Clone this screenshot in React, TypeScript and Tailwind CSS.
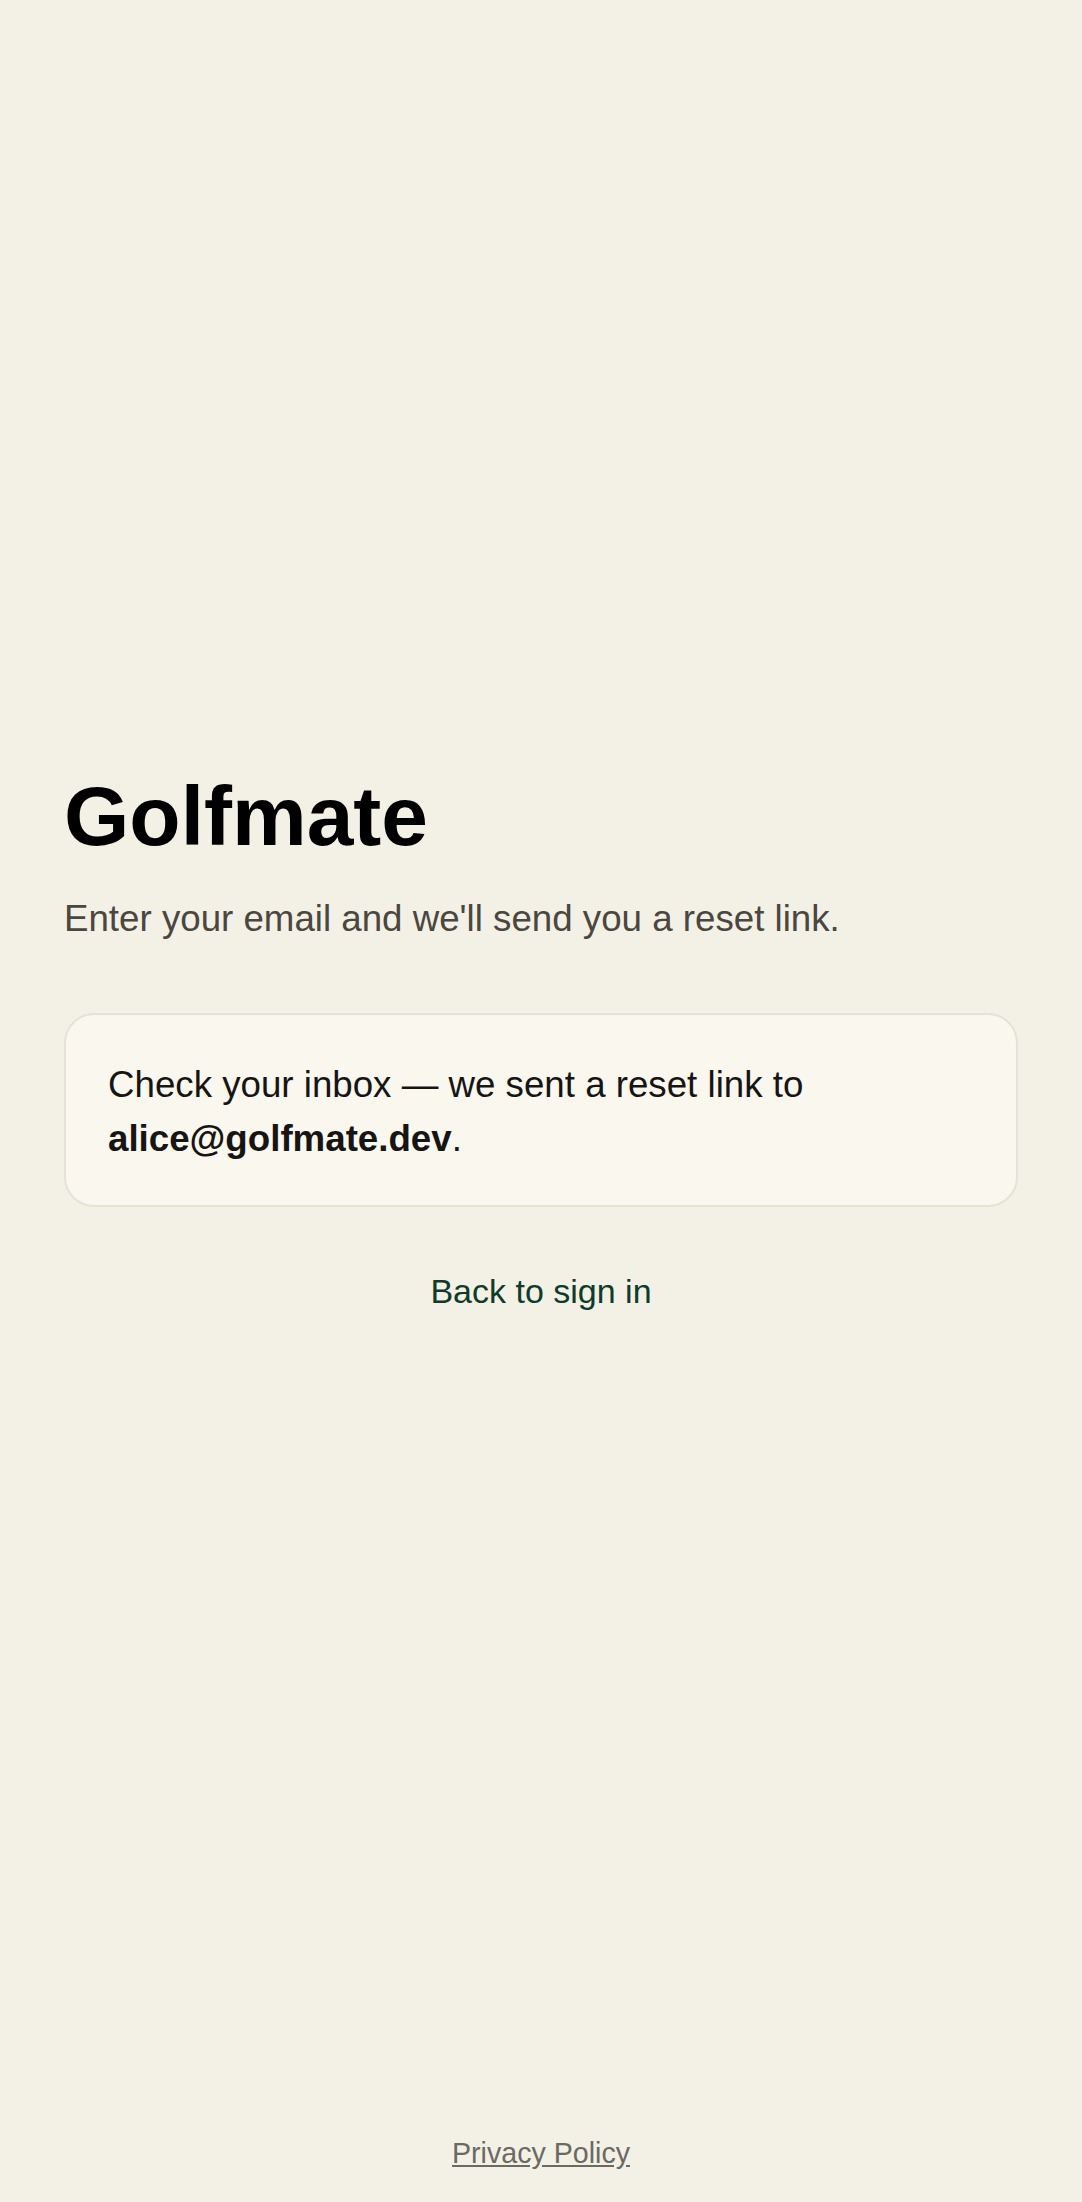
export default function App() {
  return (
    <div className="min-h-screen flex flex-col bg-[#f3f0e5] font-['Liberation_Sans',Arial,sans-serif]">
      <main className="flex-1 flex flex-col justify-center px-16">
        <h1 className="text-[84px] leading-[84px] font-bold text-black">Golfmate</h1>
        <p className="mt-[37px] text-[36.7px] leading-[48px] text-[#4a4640]">
          Enter your email and we'll send you a reset link.
        </p>

        <div className="mt-[70px] rounded-[30px] border-2 border-[#e6e2d6] bg-[#faf7ef] px-[42px] pt-[43px] pb-[39px] text-[36.7px] leading-[54px] text-[#161513]">
          Check your inbox — we sent a reset link to{" "}
          <strong className="font-bold">alice@golfmate.dev</strong>.
        </div>

        <div className="mt-[60px] flex justify-center">
          <a href="#" className="text-[34px] leading-[48px] text-[#0f3b2b]">
            Back to sign in
          </a>
        </div>
      </main>

      <footer className="flex justify-center pt-[45px] pb-[29px]">
        <a href="#" className="text-[28.6px] leading-[40px] text-[#6b6a62] underline">
          Privacy Policy
        </a>
      </footer>
    </div>
  );
}
